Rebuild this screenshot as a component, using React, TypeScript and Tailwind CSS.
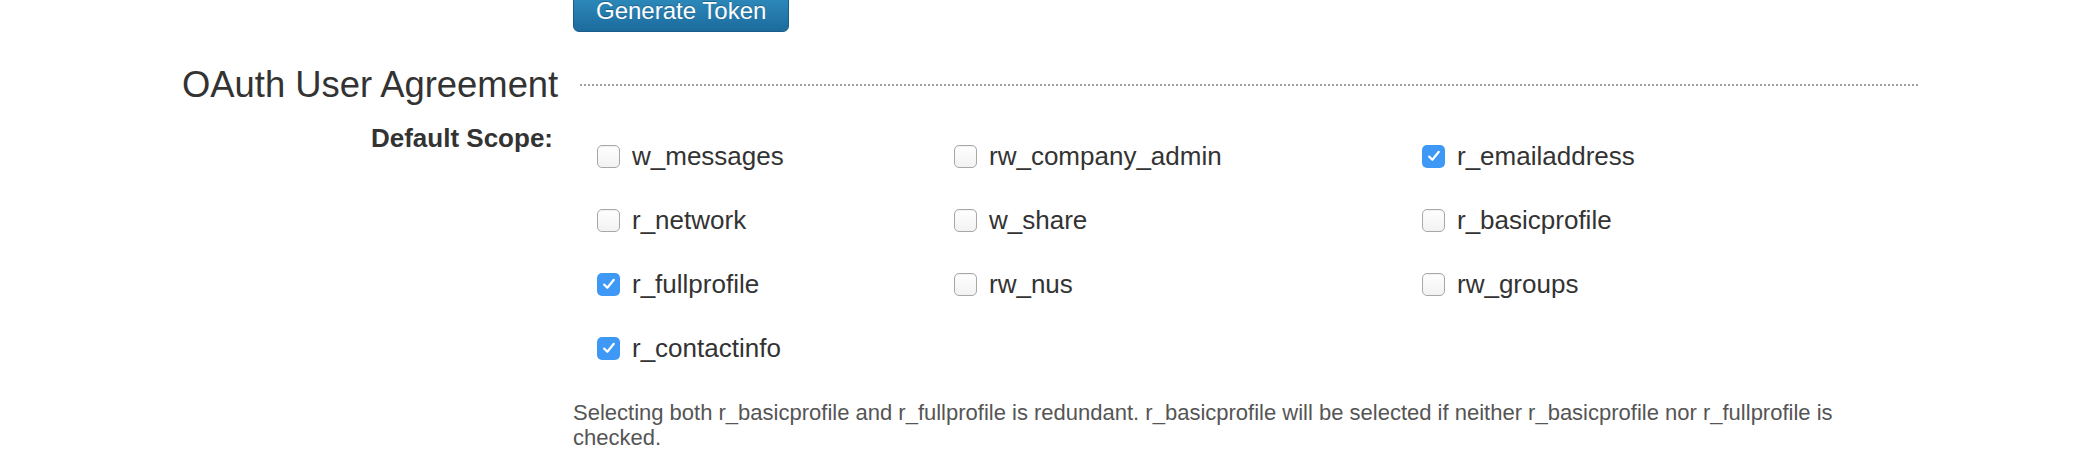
const scopes: { name: string; checked: boolean }[] = [
  { name: "w_messages", checked: false },
  { name: "rw_company_admin", checked: false },
  { name: "r_emailaddress", checked: true },
  { name: "r_network", checked: false },
  { name: "w_share", checked: false },
  { name: "r_basicprofile", checked: false },
  { name: "r_fullprofile", checked: true },
  { name: "rw_nus", checked: false },
  { name: "rw_groups", checked: false },
  { name: "r_contactinfo", checked: true },
];

const Box = ({ checked }: { checked: boolean }) =>
  checked ? (
    <span className="w-[23px] h-[23px] rounded-[5px] bg-[#3d98f6] flex items-center justify-center shrink-0">
      <svg width="16" height="16" viewBox="0 0 16 16" fill="none">
        <path d="M3.2 8.6 L6.4 11.8 L12.8 3.8" stroke="#fff" strokeWidth="2.2" strokeLinecap="round" strokeLinejoin="round" />
      </svg>
    </span>
  ) : (
    <span className="w-[23px] h-[23px] rounded-[5px] border border-[#a8a8a8] bg-gradient-to-b from-white to-[#f2f2f2] shadow-[inset_0_1px_1px_rgba(0,0,0,0.06)] shrink-0"></span>
  );

export default function App() {
  return (
    <div className="w-[2080px] h-[456px] bg-white overflow-hidden font-['Liberation_Sans',Arial,sans-serif] text-[#333]">
      {/* Generate button */}
      <div className="pl-[573px] -mt-[11px]">
        <button className="h-[43px] px-[22px] rounded-[6px] border border-[#1a5d8a] bg-gradient-to-b from-[#3191c2] to-[#1c6b9d] text-white text-[24px] leading-[26px] [text-shadow:0_-1px_0_rgba(0,0,0,0.25)]">
          Generate Token
        </button>
      </div>

      {/* Section heading */}
      <div className="flex items-center mt-[33px] pl-[182px] h-[40px]">
        <h2 className="text-[36.4px] leading-[40px] font-normal text-[#333] whitespace-nowrap">
          OAuth User Agreement
        </h2>
        <div className="ml-[22px] w-[1340px] h-[2px] bg-[linear-gradient(to_right,#a0a0a0_50%,transparent_0)] bg-[length:4px_2px]"></div>
      </div>

      {/* Default scope */}
      <div className="flex mt-[17px]">
        <div className="w-[553px] text-right font-bold text-[26px] leading-[32px] shrink-0">
          Default Scope:
        </div>
        <div className="ml-[44px] mt-[2px] grid grid-cols-[357px_468px_auto]">
          {scopes.map((s) => (
            <label key={s.name} className="h-[64px] flex items-center gap-3 text-[26px] text-[#333]">
              <Box checked={s.checked} />
              <span>{s.name}</span>
            </label>
          ))}
        </div>
      </div>

      {/* Note */}
      <p className="ml-[573px] mt-[20px] max-w-[1310px] text-[22px] leading-[25px] text-[#555]">
        Selecting both r_basicprofile and r_fullprofile is redundant. r_basicprofile will be selected if neither
        r_basicprofile nor r_fullprofile is checked.
      </p>
    </div>
  );
}
